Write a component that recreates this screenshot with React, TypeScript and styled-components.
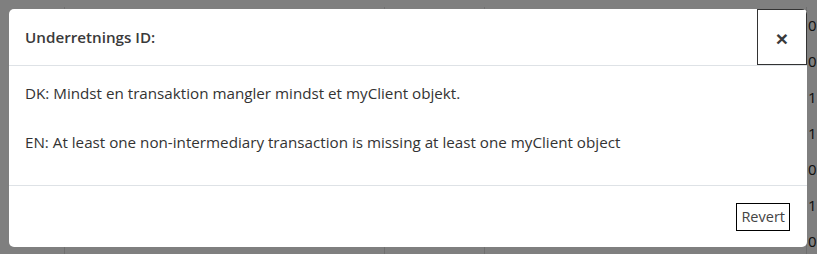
import React from "react";
import styled, { createGlobalStyle } from "styled-components";

const GlobalStyle = createGlobalStyle`
    html, body {
        margin: 0;
        padding: 0;
        width: 817px;
        height: 254px;
        overflow: hidden;
        background: #fff;
    }
    body {
        font-family: "Open Sans", "Noto Sans", sans-serif;
        color: #212529;
    }
`;

const Page = styled.div`
    position: relative;
    width: 817px;
    height: 254px;
    overflow: hidden;
`;

const Table = styled.div`
    display: grid;
    grid-template-columns: 65px 320px 100px 322px 1fr;
    grid-auto-rows: 36px;
    padding-top: 7px;
`;

const Cell = styled.div<{ last?: boolean }>`
    border-right: ${({ last }) => (last ? "none" : "1px solid #dedede")};
    font-size: 15px;
    line-height: 36px;
    color: #222;
    padding-left: 1px;
    white-space: nowrap;
    overflow: hidden;
`;

const Backdrop = styled.div`
    position: absolute;
    inset: 0;
    background: rgba(0, 0, 0, 0.5);
    padding: 9px 10px 7px 9px;
    display: flex;
`;

const Dialog = styled.div`
    flex: 1;
    background: #fff;
    border-radius: 5px;
    display: flex;
    flex-direction: column;
    overflow: hidden;
`;

const Header = styled.div`
    height: 56px;
    display: flex;
    align-items: center;
    border-bottom: 1px solid #dee2e6;
    padding-left: 16px;
`;

const Title = styled.h5`
    flex: 1;
    margin: 0;
    font-size: 15.2px;
    font-weight: 600;
    color: #3a3a3a;
`;

const CloseButton = styled.button`
    width: 50px;
    height: 56px;
    align-self: flex-start;
    background: #fff;
    border: 1px solid #333;
    border-radius: 0;
    font-family: "Liberation Sans", sans-serif;
    font-size: 21px;
    font-weight: 700;
    line-height: 1;
    color: #3a3a3a;
    padding: 2px 0 0;
    cursor: pointer;
`;

const Body = styled.div`
    height: 120px;
    padding: 15px 16px;
    box-sizing: border-box;
    border-bottom: 1px solid #dee2e6;
    font-size: 15.2px;
    line-height: 24.5px;
    color: #333;
`;

const Message = styled.p`
    margin: 0;
`;

const Footer = styled.div`
    flex: 1;
    display: flex;
    align-items: center;
    justify-content: flex-end;
    padding: 0 17px 0 0;
`;

const ActionButton = styled.button`
    height: 28px;
    padding: 0 4px;
    background: #fff;
    border: 1px solid #000;
    border-radius: 0;
    font-family: "Open Sans", "Noto Sans", sans-serif;
    font-size: 14.5px;
    color: #444;
    cursor: pointer;
`;

const digits = ["0", "0", "1", "1", "0", "1", "0"];

const App: React.FC = () => {
    return (
        <Page>
            <GlobalStyle />
            <Table>
                {digits.map((d, i) => (
                    <React.Fragment key={i}>
                        <Cell />
                        <Cell />
                        <Cell />
                        <Cell />
                        <Cell last>{d}</Cell>
                    </React.Fragment>
                ))}
            </Table>
            <Backdrop>
                <Dialog>
                    <Header>
                        <Title>Underretnings ID:</Title>
                        <CloseButton aria-label="Close">×</CloseButton>
                    </Header>
                    <Body>
                        <Message>DK: Mindst en transaktion mangler mindst et myClient objekt.</Message>
                        <br />
                        <Message>EN: At least one non-intermediary transaction is missing at least one myClient object</Message>
                    </Body>
                    <Footer>
                        <ActionButton type="button">Revert</ActionButton>
                    </Footer>
                </Dialog>
            </Backdrop>
        </Page>
    );
};

export default App;
